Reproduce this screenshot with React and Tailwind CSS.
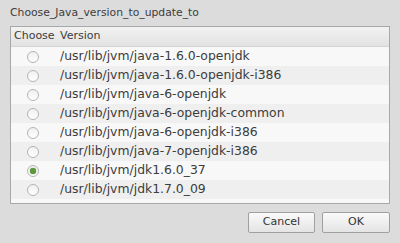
import React, { useState } from 'react';

const versions = [
  '/usr/lib/jvm/java-1.6.0-openjdk',
  '/usr/lib/jvm/java-1.6.0-openjdk-i386',
  '/usr/lib/jvm/java-6-openjdk',
  '/usr/lib/jvm/java-6-openjdk-common',
  '/usr/lib/jvm/java-6-openjdk-i386',
  '/usr/lib/jvm/java-7-openjdk-i386',
  '/usr/lib/jvm/jdk1.6.0_37',
  '/usr/lib/jvm/jdk1.7.0_09',
];

const Radio = ({ checked }) => (
  <span className="flex h-[12px] w-[12px] items-center justify-center rounded-full border border-[#b4b4b4] bg-gradient-to-b from-[#f0f0f0] to-[#ffffff]">
    {checked && <span className="h-[6px] w-[6px] rounded-full bg-[#5d9a3c] shadow-[0_0_1px_#3c6b22]" />}
  </span>
);

const Row = ({ path, index, checked, onPick }) => (
  <div
    onClick={onPick}
    className={`flex h-[19px] items-center ${index % 2 ? 'bg-[#efefef]' : 'bg-[#f8f8f8]'}`}
  >
    <div className="w-[49px] shrink-0 pl-[16px]">
      <Radio checked={checked} />
    </div>
    <span className="text-[12.4px]">{path}</span>
  </div>
);

export default function App() {
  const [picked, setPicked] = useState(6);

  return (
    <div className="flex h-[243px] w-[400px] flex-col bg-[#dcdcdc] px-[10px] pt-[5px] text-[11px] text-[#3c3c3c] font-['DejaVu_Sans',sans-serif]">
      <div className="h-[21px] text-[10.8px] leading-[16px]">Choose_Java_version_to_update_to</div>

      <div className="h-[178px] border border-[#a8a8a8] bg-[#f8f8f8]">
        {/* header */}
        <div className="flex h-[20px] items-center border-b border-[#d4d4d4] bg-gradient-to-b from-[#f2f2f2] to-[#e2e2e2]">
          <span className="w-[49px] pl-[3px]">Choose</span>
          <span>Version</span>
        </div>
        {versions.map((v, i) => (
          <Row key={v} path={v} index={i} checked={picked === i} onPick={() => setPicked(i)} />
        ))}
      </div>

      <div className="mt-[8px] flex justify-end gap-[7px]">
        <button className="h-[21px] w-[67px] rounded-[2px] border border-[#a0a0a0] bg-gradient-to-b from-[#fafafa] to-[#e4e4e4] text-[11px] text-[#333]">
          Cancel
        </button>
        <button className="h-[21px] w-[68px] rounded-[2px] border border-[#a0a0a0] bg-gradient-to-b from-[#fafafa] to-[#e4e4e4] text-[11px] text-[#333]">
          OK
        </button>
      </div>
    </div>
  );
}
